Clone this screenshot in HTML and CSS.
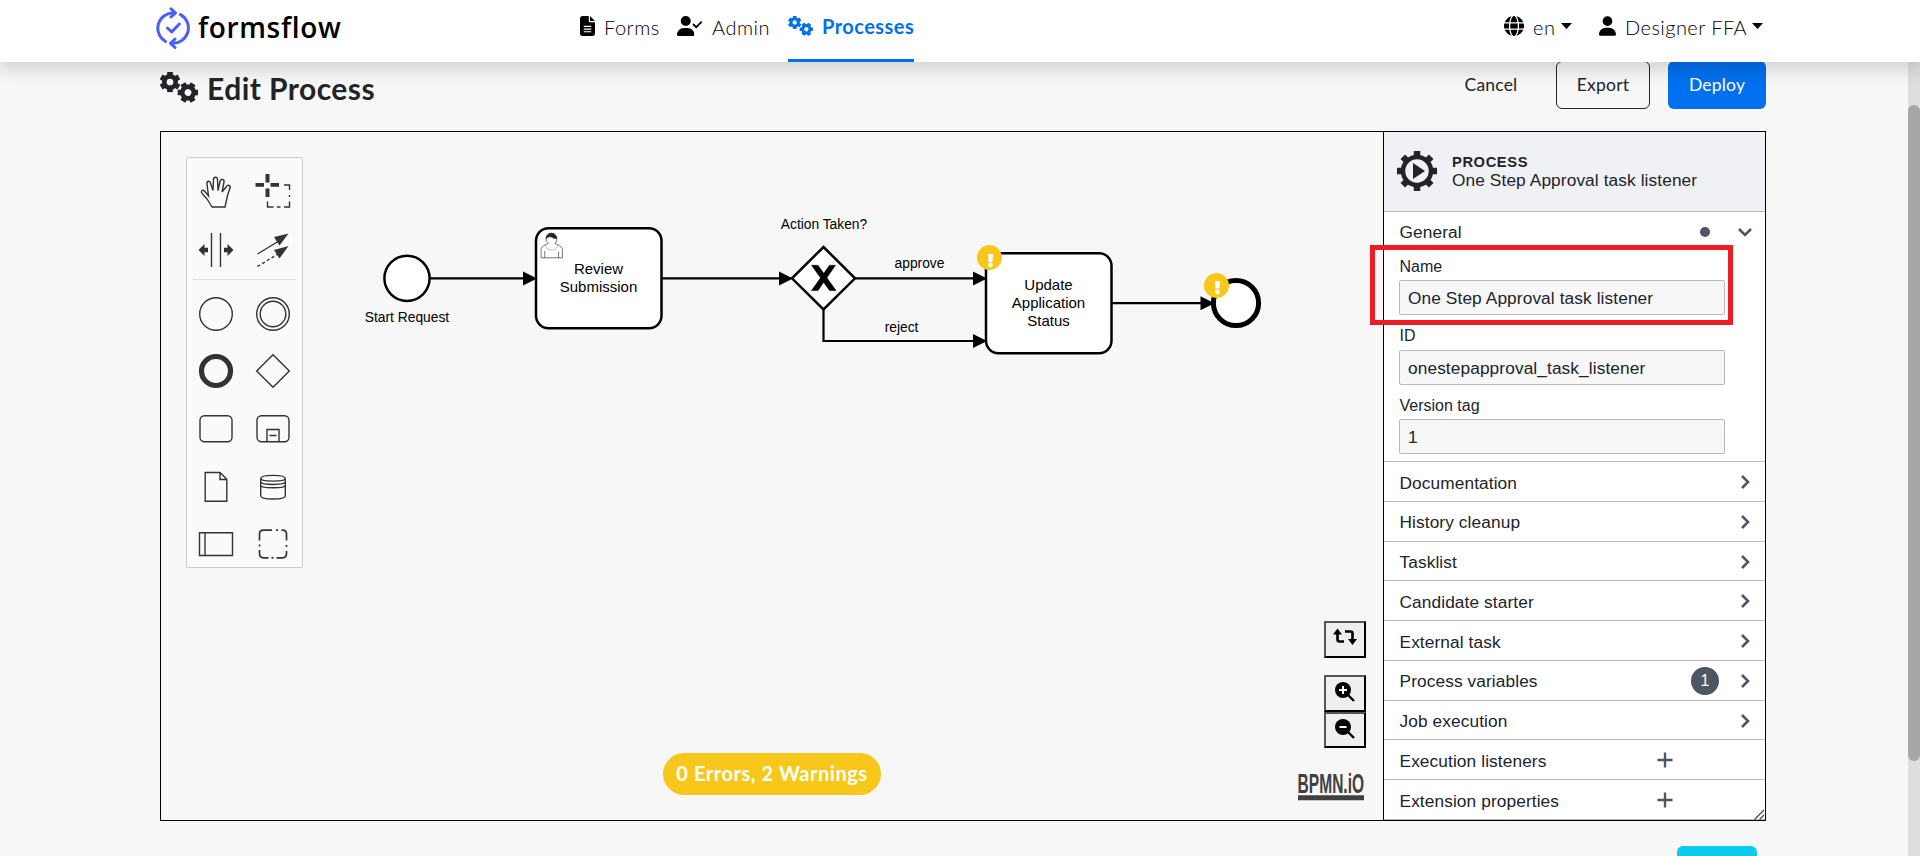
FILE: index.html
```html
<!DOCTYPE html>
<html lang="en">
<head>
<meta charset="utf-8">
<title>formsflow - Edit Process</title>
<link rel="stylesheet" href="styles.css">
</head>
<body>
<svg class="defs" width="0" height="0" aria-hidden="true">
  <symbol id="gear" viewBox="-10 -10 20 20">
    <circle r="5.4" fill="none" stroke="currentColor" stroke-width="4.4"/>
    <path d="M0-9.8V-6M0 9.8V6M8.500-4.900 5.2-3M-8.500 4.900-5.2 3M-8.500-4.900-5.2-3M8.500 4.900 5.2 3" stroke="currentColor" stroke-width="5.400"/>
  </symbol>
  <symbol id="gears" viewBox="0 0 38 31">
    <use href="#gear" x="-.5" y="-.5" width="21" height="21"/>
    <g transform="rotate(30 28 20.500)"><use href="#gear" x="17.500" y="10" width="21" height="21"/></g>
  </symbol>
  <symbol id="user" viewBox="0 0 448 512"><path fill="currentColor" d="M224 256A128 128 0 1 0 224 0a128 128 0 1 0 0 256zm-45.7 48C79.8 304 0 383.8 0 482.3C0 498.7 13.3 512 29.7 512H418.3c16.4 0 29.7-13.3 29.7-29.7C448 383.8 368.2 304 269.7 304H178.3z"/></symbol>
</svg>

<header class="topbar">
  <div class="brand">
    <svg class="brand-mark" viewBox="0 0 34 42" fill="none" stroke="#4c5ffb" stroke-width="3" stroke-linecap="round" stroke-linejoin="round">
      <path d="M9.5 34.5A15.3 15.3 0 0 1 18.500 6M24.500 7.600A15.300 15.300 0 0 1 15.500 36.200"/>
      <path d="M15 1.800 19.500 6 15 10M19 32 14.500 36.300 19 40.500M11.500 21 15.700 25 23.300 17"/>
    </svg>
    <span class="brand-name">formsflow</span>
  </div>
  <nav class="nav">
    <a class="nav-item forms">
      <svg width="15" height="20" viewBox="0 0 384 512"><path d="M64 0C28.700 0 0 28.700 0 64V448c0 35.300 28.700 64 64 64H320c35.300 0 64-28.700 64-64V160H256c-17.700 0-32-14.300-32-32V0H64zM256 0V128H384z"/><path d="M96 264H288M96 334H288M96 404H288" stroke="#fff" stroke-width="30"/></svg>
      <span>Forms</span>
    </a>
    <a class="nav-item admin">
      <svg width="25" height="20" viewBox="0 0 25 20"><svg width="17.500" height="20"><use href="#user"/></svg><path d="M16.500 8.500 19.200 11.200 24.200 6.200" fill="none" stroke="#000" stroke-width="1.800" stroke-linecap="round"/></svg>
      <span>Admin</span>
    </a>
    <a class="nav-item processes active">
      <svg width="25" height="20"><use href="#gears"/></svg>
      <span>Processes</span>
    </a>
  </nav>
  <div class="account">
    <div class="menu lang">
      <svg width="20" height="20" viewBox="0 0 512 512"><path d="M352 256c0 22.200-1.200 43.600-3.300 64H163.300c-2.200-20.400-3.300-41.800-3.300-64s1.200-43.600 3.300-64H348.700c2.200 20.400 3.300 41.800 3.300 64zm28.800-64H503.900c5.300 20.500 8.100 41.900 8.100 64s-2.800 43.500-8.100 64H380.800c2.100-20.600 3.200-42 3.200-64s-1.100-43.400-3.200-64zm112.600-32H376.700c-10-63.900-29.800-117.400-55.300-151.600c78.300 20.700 142 77.500 171.900 151.600zm-149.100 0H167.700c6.100-36.400 15.500-68.600 27-94.700c10.500-23.600 22.200-40.700 33.500-51.500C239.400 3.200 248.700 0 256 0s16.600 3.200 27.800 13.800c11.300 10.800 23 27.900 33.500 51.500c11.600 26 20.900 58.200 27 94.700zm-209 0H18.600C48.600 85.900 112.200 29.100 190.600 8.400C165.100 42.600 145.300 96.100 135.300 160zM8.100 192H131.200c-2.100 20.600-3.200 42-3.200 64s1.100 43.400 3.200 64H8.100C2.800 299.500 0 278.100 0 256s2.800-43.500 8.100-64zM194.700 446.600c-11.600-26-20.900-58.200-27-94.600H344.300c-6.100 36.400-15.500 68.600-27 94.600c-10.500 23.600-22.200 40.700-33.500 51.500C272.600 508.800 263.300 512 256 512s-16.600-3.200-27.800-13.800c-11.300-10.800-23-27.900-33.500-51.500zM135.300 352c10 63.900 29.800 117.400 55.300 151.600C112.200 482.900 48.600 426.100 18.600 352H135.300zm358.100 0c-30 74.100-93.600 130.900-171.900 151.600c25.500-34.200 45.200-87.700 55.300-151.600H493.400z"/></svg>
      <span>en</span><i class="caret"></i>
    </div>
    <div class="menu who">
      <svg width="17" height="20"><use href="#user"/></svg>
      <span>Designer FFA</span><i class="caret"></i>
    </div>
  </div>
</header>

<div class="page">
  <main class="content">
    <div class="titlebar">
      <h1><svg width="38" height="31"><use href="#gears"/></svg><span>Edit Process</span></h1>
      <div class="actions">
        <button class="btn link">Cancel</button>
        <button class="btn outline">Export</button>
        <button class="btn primary">Deploy</button>
      </div>
    </div>

    <section class="editor">
      <div class="canvas">
        <svg class="diagram" viewBox="161 132 1222 688">
          <g fill="none" stroke="#000" stroke-width="2.2">
            <path d="M429 278.300H530M661 278.300H786M854 278.300H980M823.500 309V341H980M1112 303.200H1208"/>
          </g>
          <path d="M523 271.500V285.500L537 278.500ZM779 271.500V285.500L793 278.500ZM973 271.500V285.500L987 278.500ZM973 334V348L987 341ZM1200.500 296.300V310.300L1214.500 303.300Z"/>
          <g fill="#fff" stroke="#000" stroke-width="2.500">
            <circle cx="407" cy="278.300" r="22.600"/>
            <rect x="536" y="228.300" width="125.500" height="100" rx="12.500"/>
            <rect x="986" y="253.300" width="125.500" height="100" rx="12.500"/>
            <path d="M823.500 247 855 278.300 823.500 309.500 792 278.300Z"/>
            <circle cx="1236" cy="303" r="22.600" stroke-width="5"/>
          </g>
          <path d="M811.500 265.300H818L836 290.500H829.500ZM829.500 265.300H835.500L818 290.500H811.500Z" stroke="#000" stroke-width=".5"/>
          <g transform="translate(536 228.300) scale(1.255)" stroke="#22242a" stroke-width=".5" fill="#fff">
            <path d="M15 12c.909-.845 1.594-2.049 1.594-3.385 0-2.554-1.805-4.622-4.357-4.622-2.552 0-4.288 2.068-4.288 4.622 0 1.348.974 2.562 1.896 3.405-.529.187-5.669 2.097-5.794 4.756v6.718h17v-6.718c0-2.298-5.528-4.595-6.051-4.776zm-8 6v5.500m11 0v-5"/>
            <path d="M17.162 13.009c0 2.447-2.158 4.431-4.821 4.431-2.665 0-4.822-1.981-4.822-4.431" fill="none" opacity=".5"/>
            <path fill="#22242a" d="M8.100 8.200c0 0 2.251-2.358 4.274-1.177 2.024 1.181 4.221 1.537 4.124.965-.098-.570-.117-3.791-4.191-4.136-3.575.001-4.208 3.367-4.207 4.348z"/>
          </g>
          <g class="flow-label" text-anchor="middle">
            <text x="407" y="322">Start Request</text>
            <text x="824" y="229">Action Taken?</text>
            <text x="919.500" y="268">approve</text>
            <text x="901.500" y="332">reject</text>
          </g>
          <g class="task-label" text-anchor="middle">
            <text x="598.500" y="274">Review</text><text x="598.500" y="292">Submission</text>
            <text x="1048.500" y="290">Update</text><text x="1048.500" y="308">Application</text><text x="1048.500" y="326">Status</text>
          </g>
          <g id="warnings">
            <circle cx="989.500" cy="257.500" r="12.500" fill="#f7c81b"/><path d="M988 254H993L992.500 262H988.500Z" fill="#fff"/><circle cx="990.500" cy="265" r="2.400" fill="#fff"/>
            <circle cx="1216.500" cy="285.500" r="12.500" fill="#f7c81b"/><path d="M1215 281H1220L1219.500 288.500H1215.500Z" fill="#fff"/><circle cx="1217.500" cy="292" r="2.400" fill="#fff"/>
          </g>
        </svg>

        <div class="palette">
          <div class="tools">
            <svg viewBox="-18 -18 36 36"><path d="M-4 15-8 8.500C-10 5-13 3.500-14.500.5-15-1.500-13-2.500-11.500-1L-7.500 4-9-8C-9.500-11-6.500-12-5.500-9L-3-1.500-2.500-12.500C-2.500-15.500 1.500-15.500 1.500-12.500L2-1.500 4-10.500C5-14 8.500-13 8-10L6 0 10.500-5.500C12-8 15-6.500 14-4L11.500 3.500 9 15Z"/></svg>
            <svg viewBox="-18 -18 36 36"><g fill="#333" stroke="none"><path d="M-7.500-18.500h4v9h-4zM-7.500-3.500h4v8.500h-4zM-17.500-9h8.500v3.800h-8.500zM-2.500-9h8.500v3.800h-8.500z"/></g><path d="M11-7H16.500V-2M16.500 3V5M16.500 9.500V15H11M7.500 15H4M.5 15H-5.500V9.500"/></svg>
            <svg viewBox="-18 -18 36 36"><path d="M-4.500-17V17M4.500-17V17"/><path fill="#333" stroke="none" d="M-17.500 0-11.500-6V-2.200H-8V2.200H-11.500V6ZM17.500 0 11.500-6V-2.200H8V2.200H11.500V6Z"/></svg>
            <svg viewBox="-18 -18 36 36"><path d="M-15.500 4 5-8.500"/><path d="M-15.500 16.500 5 4" stroke-dasharray="3 2.500"/><path fill="#333" stroke="none" d="M15.500-16.500 1-13 6.500-4.500ZM15.500-4 1 0 6.500 8.500Z"/></svg>
          </div>
          <hr>
          <div class="tools">
            <svg viewBox="-18 -18 36 36"><circle r="16.300"/></svg>
            <svg viewBox="-18 -18 36 36"><circle r="16.300"/><circle r="12.800"/></svg>
            <svg viewBox="-18 -18 36 36"><circle r="14.500" stroke-width="5.200"/></svg>
            <svg viewBox="-18 -18 36 36"><path d="M0-16.300 16.300 0 0 16.300-16.300 0Z"/></svg>
            <svg viewBox="-18 -18 36 36"><rect x="-16" y="-13.300" width="32" height="26" rx="4.500"/></svg>
            <svg viewBox="-18 -18 36 36"><rect x="-16" y="-13.300" width="32" height="26" rx="4.500"/><path d="M-6 12.500V.5H6V12.500M-3.500 6.500H3.500"/></svg>
            <svg viewBox="-18 -18 36 36"><path d="M-10.800-14.500H4L10.800-7.700V14.300H-10.800ZM4-14.500V-7.500H10.800"/></svg>
            <svg viewBox="-18 -18 36 36"><path d="M-12.300-8.500V9C-12.300 13 12.300 13 12.300 9V-8.500C12.300-12.700-12.300-12.700-12.300-8.500-12.300-5 12.300-5 12.300-8.500M-12.300-5.200C-12.300-1.700 12.300-1.700 12.300-5.200M-12.300-1.800C-12.300 1.600 12.300 1.600 12.300-1.800"/></svg>
            <svg viewBox="-18 -18 36 36"><path d="M-16.500-11.300H16.500V11.500H-16.500ZM-11-11.300V11.500"/></svg>
            <svg viewBox="-18 -18 36 36"><path stroke-width="1.700" d="M-13.500-3.500V-10Q-13.500-13.800-9.500-13.800H-1M8.500-13.800H9.500Q13.500-13.800 13.500-10V-3.500M13.500 7V9.500Q13.500 13.800 9.500 13.800H3.500M-4.500 13.800H-9.500Q-13.500 13.800-13.500 9.500V6M3-13.800H5M13.500 1V3M-13.500.5V2.500M-1.500 13.800H.5"/></svg>
          </div>
        </div>

        <div class="zoomers">
          <button><svg width="24" height="18" viewBox="0 0 24 18" fill="none" stroke="#000" stroke-width="2.600"><path d="M4.500 5V11.500Q4.500 13.500 6.500 13.500H11M12 3.500H17.500Q19.500 3.500 19.500 5.500V12"/><path fill="#000" stroke="none" d="M4.500 .5 9 6.500H0ZM19.500 17 15 11H24Z"/></svg></button>
          <button class="gap"><svg width="24" height="24" viewBox="0 0 24 24"><circle cx="10" cy="9" r="8"/><path d="M15 14 21 20" stroke="#000" stroke-width="2.400"/><path d="M6 9H14M10 5V13" stroke="#fff" stroke-width="2"/></svg></button>
          <button class="tight"><svg width="24" height="24" viewBox="0 0 24 24"><circle cx="10" cy="9" r="8"/><path d="M15 14 21 20" stroke="#000" stroke-width="2.400"/><path d="M6.500 9H13.500" stroke="#fff" stroke-width="2"/></svg></button>
        </div>
        <svg class="bpmn" width="68" height="29" viewBox="0 0 68 29"><text transform="scale(.61 1)" x="1" y="19.800" textLength="109" lengthAdjust="spacingAndGlyphs">BPMN.iO</text><path d="M1 22.200H67V27.200H1Z"/></svg>
        <div class="lint">0 Errors, 2 Warnings</div>
      </div>

      <aside class="panel">
        <div class="panel-head">
          <svg width="40" height="40" viewBox="-20 -20 40 40"><circle r="14" fill="none" stroke="#22242a" stroke-width="4.500"/><path d="M0-20V-14M0 20V14M20 0H14M-20 0H-14M-14.200-14.200-10-10M14.200 14.200 10 10M14.200-14.200 10-10M-14.200 14.200-10 10" stroke="#22242a" stroke-width="6.500"/><path d="M-4-8 8 0-4 8Z" fill="#22242a"/></svg>
          <div><b>PROCESS</b><span>One Step Approval task listener</span></div>
        </div>
        <div class="group general">
          <div class="group-head"><span>General</span><i class="dot"></i><svg class="chev" viewBox="-8 -8 16 16"><path d="M-6-3 0 3 6-3"/></svg></div>
          <label>Name</label><div class="field">One Step Approval task listener</div>
          <label>ID</label><div class="field">onestepapproval_task_listener</div>
          <label>Version tag</label><div class="field">1</div>
          <div class="highlight"></div>
        </div>
        <div class="group row"><span>Documentation</span><svg class="chev" viewBox="-8 -8 16 16"><path d="M-3-6 3 0-3 6"/></svg></div>
        <div class="group row"><span>History cleanup</span><svg class="chev" viewBox="-8 -8 16 16"><path d="M-3-6 3 0-3 6"/></svg></div>
        <div class="group row"><span>Tasklist</span><svg class="chev" viewBox="-8 -8 16 16"><path d="M-3-6 3 0-3 6"/></svg></div>
        <div class="group row"><span>Candidate starter</span><svg class="chev" viewBox="-8 -8 16 16"><path d="M-3-6 3 0-3 6"/></svg></div>
        <div class="group row"><span>External task</span><svg class="chev" viewBox="-8 -8 16 16"><path d="M-3-6 3 0-3 6"/></svg></div>
        <div class="group row"><span>Process variables</span><i class="count">1</i><svg class="chev" viewBox="-8 -8 16 16"><path d="M-3-6 3 0-3 6"/></svg></div>
        <div class="group row"><span>Job execution</span><svg class="chev" viewBox="-8 -8 16 16"><path d="M-3-6 3 0-3 6"/></svg></div>
        <div class="group row add"><span>Execution listeners</span><svg class="chev" viewBox="-8 -8 16 16"><path d="M-7.500 0H7.500M0-7.500V7.500"/></svg></div>
        <div class="group row add"><span>Extension properties</span><svg class="chev" viewBox="-8 -8 16 16"><path d="M-7.500 0H7.500M0-7.500V7.500"/></svg></div>
        <svg class="grip" width="11" height="11" viewBox="0 0 11 11"><path d="M.5 10.500 10 1M5.500 10.500 10 6" stroke="#444" stroke-width="1.200"/></svg>
      </aside>
    </section>
    <div class="next"></div>
  </main>
  <div class="scrollbar"><div class="thumb"></div></div>
</div>
</body>
</html>
```
FILE: styles.css
```css
* { box-sizing: border-box; }
body {
  margin: 0;
  height: 856px;
  overflow: hidden;
  background: #f7f7f7;
  color: #212529;
  font-family: Lato, "Open Sans", sans-serif;
}
svg { display: block; flex: none; }
.defs { position: absolute; }

/* top navigation */
.topbar {
  position: relative;
  z-index: 2;
  display: flex;
  height: 62px;
  padding-left: 156px;
  background: #fff;
  color: #000;
  box-shadow: 0 8px 16px rgba(0, 0, 0, .15);
}
.brand { display: flex; width: 424px; padding-top: 7px; gap: 8px; }
.brand-mark { width: 34px; height: 42px; }
.brand-name { font-family: "Open Sans", Lato, sans-serif; font-size: 28px; line-height: 41px; font-weight: 600; letter-spacing: .65px; }
.nav { display: flex; width: 924px; }
.nav-item { display: flex; height: 62px; padding-top: 16px; gap: 9px; font-size: 20px; line-height: 22px; letter-spacing: .5px; }
.nav-item span, .menu span { white-space: nowrap; font-weight: 300; }
.forms { width: 97px; }
.admin { width: 111px; gap: 10px; }
.processes { width: 126px; }
.processes.active { border-bottom: 3px solid #0070ee; color: #0070ee; letter-spacing: .45px; }
.processes.active span { font-weight: 700; line-height: 21px; }
.account { display: flex; }
.menu { display: flex; padding-top: 16px; font-size: 20px; line-height: 22px; }
.menu span { margin-left: 9px; letter-spacing: .45px; }
.lang span { width: 22px; }
.who span { width: 121px; }
.lang { width: 95px; }
.caret { margin: 7px 0 0 6px; width: 11px; height: 6px; background: #000; clip-path: polygon(0 0, 100% 0, 50% 100%); }

/* page */
.page { display: flex; justify-content: space-between; height: 794px; }
.content { width: 1607px; margin-left: 160px; }
.titlebar { display: flex; justify-content: space-between; height: 69px; }
h1 { display: flex; gap: 9px; margin: 0; padding-top: 10px; font-size: 30px; line-height: 32px; font-weight: 700; letter-spacing: .45px; }
h1 span { white-space: nowrap; }
.actions { display: flex; margin-top: -1px; }
.btn {
  height: 48px;
  padding: 0;
  border: 1px solid transparent;
  border-radius: 6px;
  background: none;
  color: #212529;
  font: 17.500px/20px Lato, "Open Sans", sans-serif;
  letter-spacing: .2px;
}
.link { width: 90px; margin-right: 20px; }
.outline { width: 94px; margin-right: 18px; border-color: #212529; }
.primary { width: 98px; margin-right: 1px; background: #0070ee; color: #fff; }

.editor {
  display: flex;
  width: 1606px;
  height: 690px;
  border: 1px solid #000;
}
.canvas { position: relative; width: 1222px; }
.diagram { position: absolute; inset: 0; width: 1222px; height: 688px; }
.diagram text { font-family: "Liberation Sans", Arial, sans-serif; }
.flow-label { font-size: 13.800px; }
.task-label { font-size: 15px; }

.palette {
  position: absolute;
  left: 25px;
  top: 25px;
  width: 117px;
  height: 411px;
  padding: 16px 11px 0;
  border: 1px solid #ccc;
  border-radius: 2px;
  background: #fafafa;
}
.tools { display: grid; grid-template-columns: 36px 36px; column-gap: 21px; row-gap: 21.700px; }
.tools svg { width: 36px; height: 36px; fill: none; stroke: #333; stroke-width: 1.400; }
.palette hr { height: 1px; margin: 11px -5px 16px; border: 0; background: #ddd; }

.zoomers { position: absolute; right: 17px; top: 489px; display: flex; flex-direction: column; }
.zoomers button {
  display: flex;
  justify-content: center;
  width: 42px;
  height: 37px;
  padding: 5px 0 0;
  border: 2px solid #000;
  border-top-color: #555;
  border-left-color: #555;
  background: #efefef;
}
.zoomers .gap { margin-top: 17px; padding-top: 4px; }
.zoomers .tight { height: 36px; padding-top: 4px; }
.bpmn { position: absolute; left: 1136px; top: 641px; overflow: visible; fill: #404040; font: 700 26.800px/1 "Liberation Sans", Arial, sans-serif; }
.lint {
  position: absolute;
  left: 502px;
  top: 621px;
  width: 218px;
  height: 42px;
  border-radius: 21px;
  background: #f7c81b;
  color: #fff;
  font-size: 20px;
  font-weight: 700;
  letter-spacing: .55px;
  line-height: 41px;
  text-align: center;
  white-space: nowrap;
}

/* properties panel */
.panel {
  position: relative;
  width: 382px;
  border-left: 1px solid #000;
  background: #fff;
  color: #22242a;
  font-family: "Liberation Sans", Arial, sans-serif;
  font-size: 17.300px;
  letter-spacing: .1px;
}
.panel-head { display: flex; gap: 15px; height: 80px; padding: 19px 0 0 13px; border-bottom: 1px solid #b8b9c8; background: #f0f1f4; }
.panel-head b { display: block; padding-top: 2px; font-size: 14.700px; line-height: 18px; letter-spacing: .6px; }
.panel-head span { display: block; line-height: 18px; white-space: nowrap; }
.group { border-bottom: 1px solid #b8b9c8; padding: 0 12px 0 15.500px; }
.general { position: relative; height: 250px; }
.group-head { display: flex; align-items: center; height: 40px; }
.group-head span, .row span { flex: 1; }
.dot { width: 10px; height: 10px; margin-right: 27px; border-radius: 50%; background: #4f5562; }
.chev { width: 16px; height: 16px; fill: none; stroke: #4f5562; stroke-width: 2.600; }
label { display: block; height: 28px; padding-top: 4.500px; font-size: 16px; line-height: 20px; letter-spacing: 0; }
.field {
  width: 326px;
  height: 35px;
  margin: 0 0 6.500px -.5px;
  padding-left: 8px;
  border: 1px solid #b8b9c8;
  border-radius: 2px;
  background: #f7f7f8;
  line-height: 34px;
}
.highlight { position: absolute; left: -14px; top: 33px; width: 363px; height: 80px; border: 5px solid #ee1c24; }
.row { display: flex; align-items: center; height: 39.750px; padding-top: 3.500px; }
.row .chev { margin-top: -2px; }
.count { width: 28px; height: 28px; margin: -2px 18px 0 0; border-radius: 50%; background: #4f5562; color: #fff; font-size: 16px; font-style: normal; line-height: 28px; text-align: center; }
.add .chev { margin-right: 80px; stroke-width: 2.400; }
.grip { position: absolute; right: 0; bottom: 0; }

.next { width: 80px; height: 40px; margin: 25px 0 0 1517px; border-radius: 6px; background: #0dcaf0; }
.scrollbar { width: 12px; padding-top: 43px; background: #dedede; }
.thumb { height: 656px; border-radius: 6px; background: #a6a6a6; }
```
